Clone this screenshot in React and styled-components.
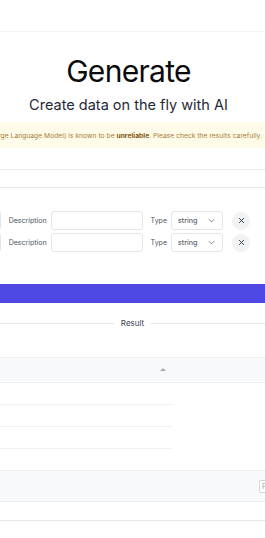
import React from "react";
import styled, { createGlobalStyle } from "styled-components";

const GlobalStyle = createGlobalStyle`
  body {
    margin: 0;
    background: #ffffff;
    font-family: Inter, "Noto Sans", sans-serif;
    color: #111827;
    overflow: hidden;
  }
`;

function App() {
  const fields = [1, 2];
  const rows = [1, 2, 3, 4];

  return (
    <Page>
      <GlobalStyle />
      <TopBar />
      <Hero>
        <Title>Generate</Title>
        <Subtitle>Create data on the fly with AI</Subtitle>
      </Hero>
      <Warning>
        <span>
          LLM (Large Language Model) is known to be <b>unreliable</b>. Please
          check the results carefully.
        </span>
      </Warning>
      <PromptInput />
      <Fields>
        {fields.map((f) => (
          <FieldRow key={f}>
            <TextBox $w={92} />
            <Label>Description</Label>
            <TextBox $w={92} />
            <Label>Type</Label>
            <Select>
              string
              <svg width="7" height="5" viewBox="0 0 8 5" fill="none">
                <path d="M1 1l3 3 3-3" stroke="#6b7280" strokeWidth="1" />
              </svg>
            </Select>
            <RemoveButton>
              <svg width="7" height="7" viewBox="0 0 8 8">
                <path
                  d="M1.5 1.5l5 5M6.5 1.5l-5 5"
                  stroke="#374151"
                  strokeWidth="1.1"
                  strokeLinecap="round"
                />
              </svg>
            </RemoveButton>
          </FieldRow>
        ))}
      </Fields>
      <GenerateButton />
      <Divider>
        <span>Result</span>
      </Divider>
      <Table>
        <HeaderRow>
          <SortArrow />
        </HeaderRow>
        {rows.map((r) => (
          <BodyRow key={r} />
        ))}
        <Footer>
          <PageBox>P</PageBox>
        </Footer>
        <BottomLine />
      </Table>
    </Page>
  );
}

export default App;

const Page = styled.div`
  width: 100%;
  overflow: hidden;
`;

const TopBar = styled.div`
  height: 31px;
  border-bottom: 1px solid #f2f4f5;
`;

const Hero = styled.div`
  text-align: center;
  padding-top: 21px;
  padding-right: 8px;
`;

const Title = styled.h1`
  margin: 0;
  font-size: 30px;
  line-height: 36px;
  font-weight: 400;
  letter-spacing: -0.7px;
  color: #0b0b0b;
`;

const Subtitle = styled.p`
  margin: 6px 0 0;
  font-size: 14.5px;
  line-height: 20px;
  color: #1f2937;
`;

const Warning = styled.div`
  margin-top: 7px;
  height: 26px;
  background: #fefbe8;
  display: flex;
  align-items: center;
  justify-content: flex-end;
  padding-right: 3px;
  white-space: nowrap;
  font-size: 6.75px;
  color: #a9803a;

  b {
    color: #85560f;
    font-weight: 700;
  }
`;

const PromptInput = styled.div`
  margin-top: 21px;
  height: 17px;
  border-top: 1px solid #ececec;
  border-bottom: 1px solid #e6e6e6;
`;

const Fields = styled.div`
  margin-top: 23px;
  display: flex;
  flex-direction: column;
  gap: 3px;
`;

const FieldRow = styled.div`
  display: flex;
  justify-content: flex-end;
  align-items: center;
  padding-right: 15px;
  height: 19px;
  white-space: nowrap;
`;

const Label = styled.span`
  font-size: 7px;
  color: #4b5563;
  margin: 0 4px 0 8px;
`;

const TextBox = styled.div`
  flex: none;
  width: ${(p) => p.$w}px;
  height: 19px;
  box-sizing: border-box;
  border: 1px solid #e3e5e8;
  border-radius: 3px;
`;

const Select = styled.div`
  flex: none;
  width: 52px;
  height: 19px;
  box-sizing: border-box;
  border: 1px solid #e3e5e8;
  border-radius: 3px;
  display: flex;
  align-items: center;
  justify-content: space-between;
  padding: 0 7px 0 6px;
  font-size: 7.2px;
  color: #374151;
`;

const RemoveButton = styled.div`
  flex: none;
  width: 18px;
  height: 18px;
  border-radius: 50%;
  background: #f1f2f4;
  margin-left: 9px;
  display: flex;
  align-items: center;
  justify-content: center;
`;

const GenerateButton = styled.div`
  margin-top: 32px;
  height: 19px;
  background: #5048e5;
`;

const Divider = styled.div`
  margin-top: 15px;
  display: flex;
  align-items: center;
  gap: 7px;
  font-size: 8px;
  color: #374151;

  &::before,
  &::after {
    content: "";
    flex: 1;
    height: 1px;
    background: #e5e7eb;
  }
`;

const Table = styled.div`
  margin-top: 29px;
`;

const HeaderRow = styled.div`
  position: relative;
  height: 24px;
  background: #f8f9fa;
  border-top: 1px solid #eef0f2;
  border-bottom: 1px solid #eef0f2;
`;

const SortArrow = styled.span`
  position: absolute;
  left: 160px;
  top: 10px;
  width: 0;
  height: 0;
  border-left: 3px solid transparent;
  border-right: 3px solid transparent;
  border-bottom: 3px solid #a8abb0;
`;

const BodyRow = styled.div`
  width: 173px;
  height: 21px;
  border-bottom: 1px solid #eef0f2;

  &:nth-of-type(5) {
    border-bottom: none;
  }
`;

const Footer = styled.div`
  height: 30px;
  background: #f8f9fa;
  border-top: 1px solid #eef0f2;
  border-bottom: 1px solid #eef0f2;
  display: flex;
  align-items: center;
  justify-content: flex-end;
  overflow: hidden;
`;

const PageBox = styled.div`
  flex: none;
  width: 12px;
  height: 13px;
  margin-right: -6px;
  box-sizing: border-box;
  border: 1px solid #d6d8db;
  border-radius: 2px;
  background: #ffffff;
  font-size: 7px;
  color: #9ca3af;
  padding-left: 2px;
  line-height: 11px;
`;

const BottomLine = styled.div`
  margin-top: 18px;
  height: 1px;
  background: #e5e7eb;
`;
